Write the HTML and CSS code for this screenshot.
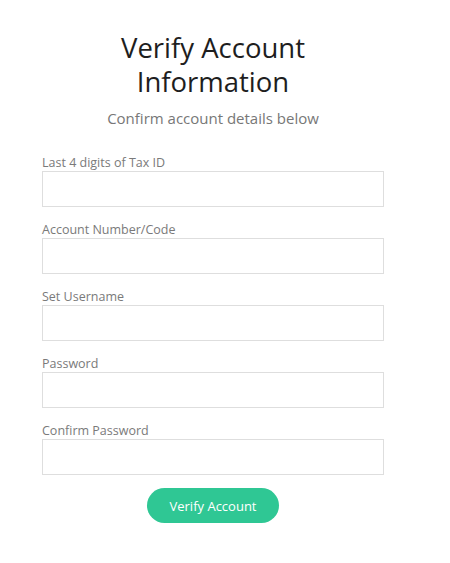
FILE: index.html
```html
<!DOCTYPE html>
<html lang="en">
<head>
  <meta charset="UTF-8">
  <meta name="viewport" content="width=device-width, initial-scale=1.0">
  <title>Verify Account Information</title>
  <link rel="stylesheet" href="styles.css">
</head>
<body>
  <div id="container">
    <h1>Verify Account<br>Information</h1>
    <p class="subtitle">Confirm account details below</p>

    <form id="verify-form">
      <label class="field">
        <span>Last 4 digits of Tax ID</span>
        <input type="text">
      </label>
      <label class="field">
        <span>Account Number/Code</span>
        <input type="text">
      </label>
      <label class="field">
        <span>Set Username</span>
        <input type="text">
      </label>
      <label class="field">
        <span>Password</span>
        <input type="password">
      </label>
      <label class="field">
        <span>Confirm Password</span>
        <input type="password">
      </label>
      <button type="button" id="verify-btn">Verify Account</button>
    </form>
  </div>
</body>
</html>
```

FILE: styles.css
```css
body {
  font-family: "Open Sans", Arial, sans-serif;
  background: #fff;
  color: #222;
  margin: 0;
  padding: 0;
}

#container {
  width: 342px;
  margin: 0 0 0 42px;
  padding-top: 31px;
}

h1 {
  margin: 0;
  font-size: 27.5px;
  font-weight: 400;
  line-height: 34px;
  text-align: center;
  color: #1e1e1e;
}

.subtitle {
  margin: 10px 0 27px;
  font-size: 15px;
  line-height: 18px;
  text-align: center;
  color: #777;
}

#verify-form {
  display: flex;
  flex-direction: column;
  gap: 14px;
}

.field {
  display: flex;
  flex-direction: column;
  gap: 0;
}

.field span {
  font-size: 12.5px;
  line-height: 17px;
  color: #7a7a7a;
}

.field input {
  box-sizing: border-box;
  width: 100%;
  height: 36px;
  border: 1px solid #dedede;
  border-radius: 0;
  padding: 0 10px;
  font-size: 13px;
  background: #fff;
}

#verify-btn {
  align-self: center;
  width: 132px;
  height: 35px;
  margin-top: -1px;
  border: none;
  border-radius: 18px;
  background-color: #2fc794;
  color: #fff;
  font-family: inherit;
  font-size: 13px;
  font-weight: 500;
  cursor: pointer;
}
```
